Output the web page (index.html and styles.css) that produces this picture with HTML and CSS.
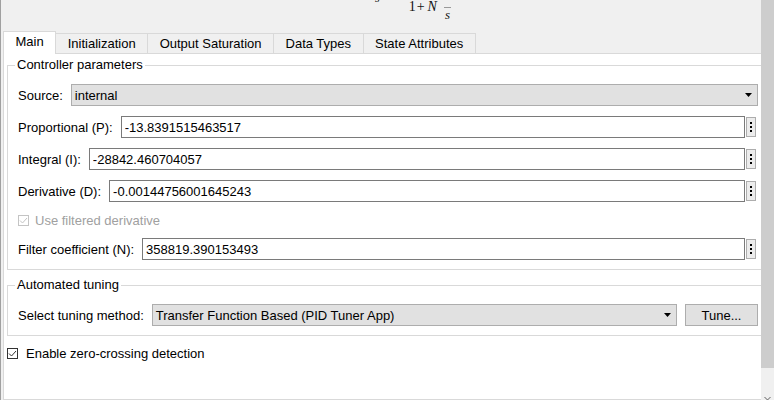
FILE: index.html
```html
<!DOCTYPE html>
<html>
<head>
<meta charset="utf-8">
<title>PID Controller</title>
<link rel="stylesheet" href="styles.css">
</head>
<body>
<div class="window">
  <div class="main">
    <div class="content">
      <div class="header">
        <div class="formula">
          <span class="f-cut">s</span>
          <span class="f-one">1</span>
          <span class="f-plus">+</span>
          <span class="f-n">N</span>
          <span class="f-frac"><span class="f-bar"></span><span class="f-s">s</span></span>
        </div>
      </div>
      <div class="tabs">
        <div class="tab active">Main</div>
        <div class="tab">Initialization</div>
        <div class="tab">Output Saturation</div>
        <div class="tab">Data Types</div>
        <div class="tab">State Attributes</div>
      </div>
      <div class="panel">
        <fieldset class="group">
          <legend>Controller parameters</legend>
          <div class="rows">
            <div class="row">
              <span class="lbl">Source:</span>
              <div class="select"><span>internal</span><svg class="arrow" width="7" height="4" viewBox="0 0 7 4"><path d="M0 0H7L3.5 4Z" fill="#000"/></svg></div>
            </div>
            <div class="row">
              <span class="lbl">Proportional (P):</span>
              <div class="ctl"><input class="field" type="text" value="-13.8391515463517"><div class="dots"><svg width="2" height="10" viewBox="0 0 2 10"><rect y="0" width="2" height="2"/><rect y="4" width="2" height="2"/><rect y="8" width="2" height="2"/></svg></div></div>
            </div>
            <div class="row">
              <span class="lbl">Integral (I):</span>
              <div class="ctl"><input class="field" type="text" value="-28842.460704057"><div class="dots"><svg width="2" height="10" viewBox="0 0 2 10"><rect y="0" width="2" height="2"/><rect y="4" width="2" height="2"/><rect y="8" width="2" height="2"/></svg></div></div>
            </div>
            <div class="row">
              <span class="lbl">Derivative (D):</span>
              <div class="ctl"><input class="field" type="text" value="-0.00144756001645243"><div class="dots"><svg width="2" height="10" viewBox="0 0 2 10"><rect y="0" width="2" height="2"/><rect y="4" width="2" height="2"/><rect y="8" width="2" height="2"/></svg></div></div>
            </div>
            <div class="row check disabled">
              <svg class="cb" width="11" height="11" viewBox="0 0 11 11"><rect x="0.5" y="0.5" width="10" height="10" fill="#fff" stroke="#c4c4c4"/><path d="M2 5.5L4.5 8L9 3" fill="none" stroke="#c4c4c4"/></svg>
              <span>Use filtered derivative</span>
            </div>
            <div class="row">
              <span class="lbl">Filter coefficient (N):</span>
              <div class="ctl"><input class="field" type="text" value="358819.390153493"><div class="dots"><svg width="2" height="10" viewBox="0 0 2 10"><rect y="0" width="2" height="2"/><rect y="4" width="2" height="2"/><rect y="8" width="2" height="2"/></svg></div></div>
            </div>
          </div>
        </fieldset>
        <fieldset class="group group2">
          <legend>Automated tuning</legend>
          <div class="rows">
            <div class="row">
              <span class="lbl">Select tuning method:</span>
              <div class="select"><span>Transfer Function Based (PID Tuner App)</span><svg class="arrow" width="7" height="4" viewBox="0 0 7 4"><path d="M0 0H7L3.5 4Z" fill="#000"/></svg></div>
              <div class="btn">Tune...</div>
            </div>
          </div>
        </fieldset>
        <div class="zc">
          <svg class="cb" width="11" height="11" viewBox="0 0 11 11"><rect x="0.5" y="0.5" width="10" height="10" fill="#fff" stroke="#333"/><path d="M2 5.5L4.5 8L9 3" fill="none" stroke="#333"/></svg>
          <span>Enable zero-crossing detection</span>
        </div>
      </div>
    </div>
  </div>
  <div class="scrollbar">
    <div class="thumb"></div>
    <div class="sb-btn"><svg width="7" height="6" viewBox="0 0 7 6"><path d="M0.5 1L3.5 4L6.5 1" fill="none" stroke="#606060"/></svg></div>
  </div>
</div>
</body>
</html>
```
FILE: styles.css
```css
html, body {
  margin: 0;
  padding: 0;
}
body {
  font-family: "Liberation Sans", Arial, sans-serif;
  font-size: 13px;
  color: #000;
  background: #fff;
}
.window {
  display: flex;
  width: 774px;
  height: 400px;
  box-sizing: border-box;
  border-left: 1px solid #a0a0a0;
  background: #f0f0f0;
  overflow: hidden;
}
.main {
  width: 760px;
  flex: none;
  overflow: hidden;
  display: flex;
}
.content {
  width: 770px;
  flex: none;
  display: flex;
  flex-direction: column;
}

/* header formula */
.header {
  height: 31px;
  flex: none;
  overflow: hidden;
}
.formula {
  display: flex;
  align-items: flex-start;
  margin-left: 374px;
  font-family: "Liberation Serif", "DejaVu Serif", serif;
  font-size: 14px;
  line-height: 14px;
  color: #111;
}
.f-cut {
  font-style: italic;
  font-size: 12px;
  line-height: 12px;
  margin-top: -8px;
}
.f-one {
  margin-left: 29px;
}
.f-plus {
  margin-left: 1px;
}
.f-n {
  font-style: italic;
  margin-left: 3px;
}
.f-frac {
  display: flex;
  flex-direction: column;
  align-items: center;
  margin-left: 7px;
  margin-top: 7px;
}
.f-bar {
  width: 7px;
  height: 1px;
  background: #999;
}
.f-s {
  font-style: italic;
  font-size: 13px;
  line-height: 13px;
}

/* tabs */
.tabs {
  display: flex;
  align-items: flex-end;
  margin-left: 2px;
  margin-bottom: -1px;
  flex: none;
}
.tab {
  border: 1px solid #d9d9d9;
  border-bottom: 0;
  padding: 0 11.5px;
  line-height: 19px;
  margin-left: -1px;
  margin-bottom: 1px;
  background: #f0f0f0;
  white-space: nowrap;
}
.tab:first-child {
  margin-left: 0;
}
.tab.active {
  background: #fff;
  line-height: 20px;
  padding-bottom: 2px;
  margin-bottom: 0;
  position: relative;
  z-index: 1;
}

/* panel */
.panel {
  flex: 1;
  margin-left: 2px;
  background: #fff;
  border: 1px solid #d9d9d9;
  display: flex;
  flex-direction: column;
}
.group {
  margin: 3px 3px 0;
  padding: 11px 8px 9px 10px;
  border: 1px solid #d9d9d9;
  min-width: 0;
}
.group2 {
  margin-top: 7px;
}
.group legend {
  margin-left: -3px;
  padding: 0 2px;
  line-height: 16px;
}
.rows {
  display: flex;
  flex-direction: column;
  gap: 10px;
}
.row {
  display: flex;
  align-items: center;
  gap: 8px;
  height: 22px;
}
.lbl {
  white-space: nowrap;
}
.row.check {
  height: 16px;
  gap: 6px;
}
.row.disabled {
  color: #a0a0a0;
}
.cb {
  flex: none;
  display: block;
}
.ctl {
  flex: 1;
  display: flex;
  align-items: center;
  gap: 1px;
  min-width: 0;
}
.field {
  flex: 1;
  min-width: 0;
  height: 22px;
  box-sizing: border-box;
  border: 1px solid #7a7a7a;
  padding: 0 3px;
  margin: 0;
  font: inherit;
  color: #000;
  background: #fff;
  outline: none;
}
.dots {
  flex: none;
  width: 10px;
  height: 20px;
  box-sizing: border-box;
  border: 1px solid #adadad;
  background: #ececec;
  display: flex;
  align-items: center;
  justify-content: center;
  margin-right: 2px;
}
.dots svg {
  display: block;
  fill: #000;
}
.select {
  flex: 1;
  min-width: 0;
  height: 22px;
  box-sizing: border-box;
  border: 1px solid #adadad;
  background: #e1e1e1;
  display: flex;
  align-items: center;
  justify-content: space-between;
  padding: 0 5px 0 3px;
  white-space: nowrap;
}
.arrow {
  display: block;
  flex: none;
}
.btn {
  flex: none;
  width: 73px;
  height: 22px;
  box-sizing: border-box;
  border: 1px solid #adadad;
  background: #e1e1e1;
  display: flex;
  align-items: center;
  justify-content: center;
}
.zc {
  margin: 9px 0 0 3px;
  display: flex;
  align-items: center;
  gap: 8px;
  height: 16px;
}

/* scrollbar */
.scrollbar {
  width: 13px;
  flex: none;
  background: #f0f0f0;
  display: flex;
  flex-direction: column;
  overflow: hidden;
}
.thumb {
  height: 368px;
  background: #cdcdcd;
  flex: none;
}
.sb-btn {
  margin-top: auto;
  height: 4px;
  padding-left: 3px;
  overflow: hidden;
}
.sb-btn svg {
  display: block;
}
```
